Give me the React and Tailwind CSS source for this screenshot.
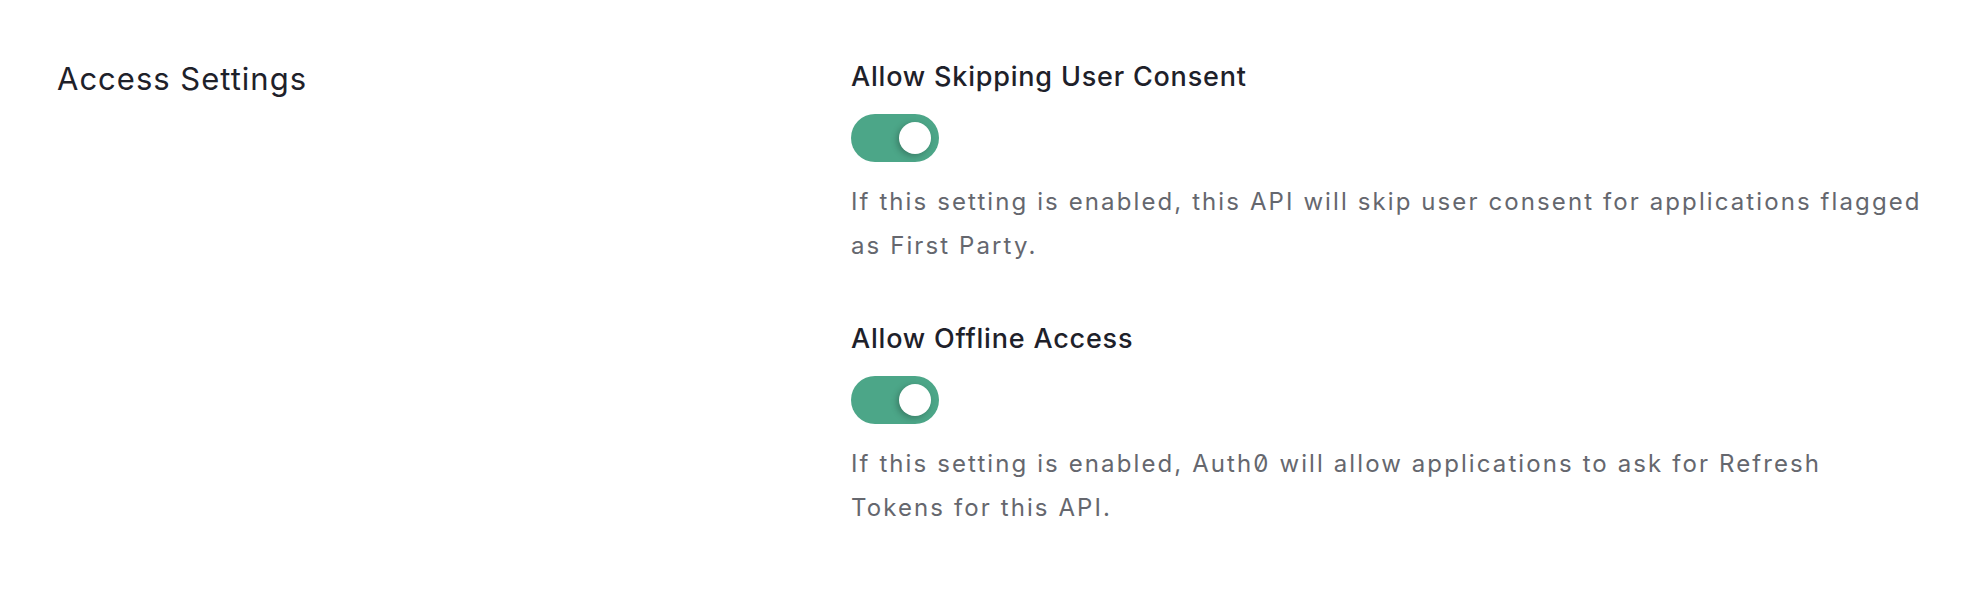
import React, { useState } from 'react'

const Toggle = ({ on, onClick }) => {
  return (
    <button
      onClick={onClick}
      className={`mt-[21px] flex items-center w-[88px] h-[48px] rounded-full px-[8px] ${on ? 'bg-[#4ca688] justify-end' : 'bg-[#c9cace] justify-start'}`}
    >
      <span className='block w-[32px] h-[32px] rounded-full bg-white shadow-[-2px_2px_6px_rgba(0,0,0,0.25)]' />
    </button>
  )
}

const Setting = ({ title, desc }) => {
  const [on, setOn] = useState(true)
  return (
    <div className='flex flex-col items-start'>
      <p className='text-[27px] leading-[32px] tracking-[0.8px] font-medium text-[#1e212a]'>{title}</p>
      <Toggle on={on} onClick={() => setOn(!on)} />
      <p className="mt-[18px] text-[24px] leading-[44px] tracking-[2.1px] text-[#65676e] [font-feature-settings:'zero']">{desc}</p>
    </div>
  )
}

const App = () => {
  return (
    <div className='w-full min-h-[590px] bg-white pt-[61px] pl-[57px] pr-[48px] flex' style={{ fontFamily: 'Inter, "Noto Sans", sans-serif' }}>
      <div className='w-[794px] shrink-0'>
        <p className='text-[31px] leading-[36px] tracking-[1px] text-[#1e212a]'>Access Settings</p>
      </div>
      <div className='flex-1 flex flex-col gap-[55px]'>
        <Setting
          title='Allow Skipping User Consent'
          desc='If this setting is enabled, this API will skip user consent for applications flagged as First Party.'
        />
        <Setting
          title='Allow Offline Access'
          desc='If this setting is enabled, Auth0 will allow applications to ask for Refresh Tokens for this API.'
        />
      </div>
    </div>
  )
}

export default App
